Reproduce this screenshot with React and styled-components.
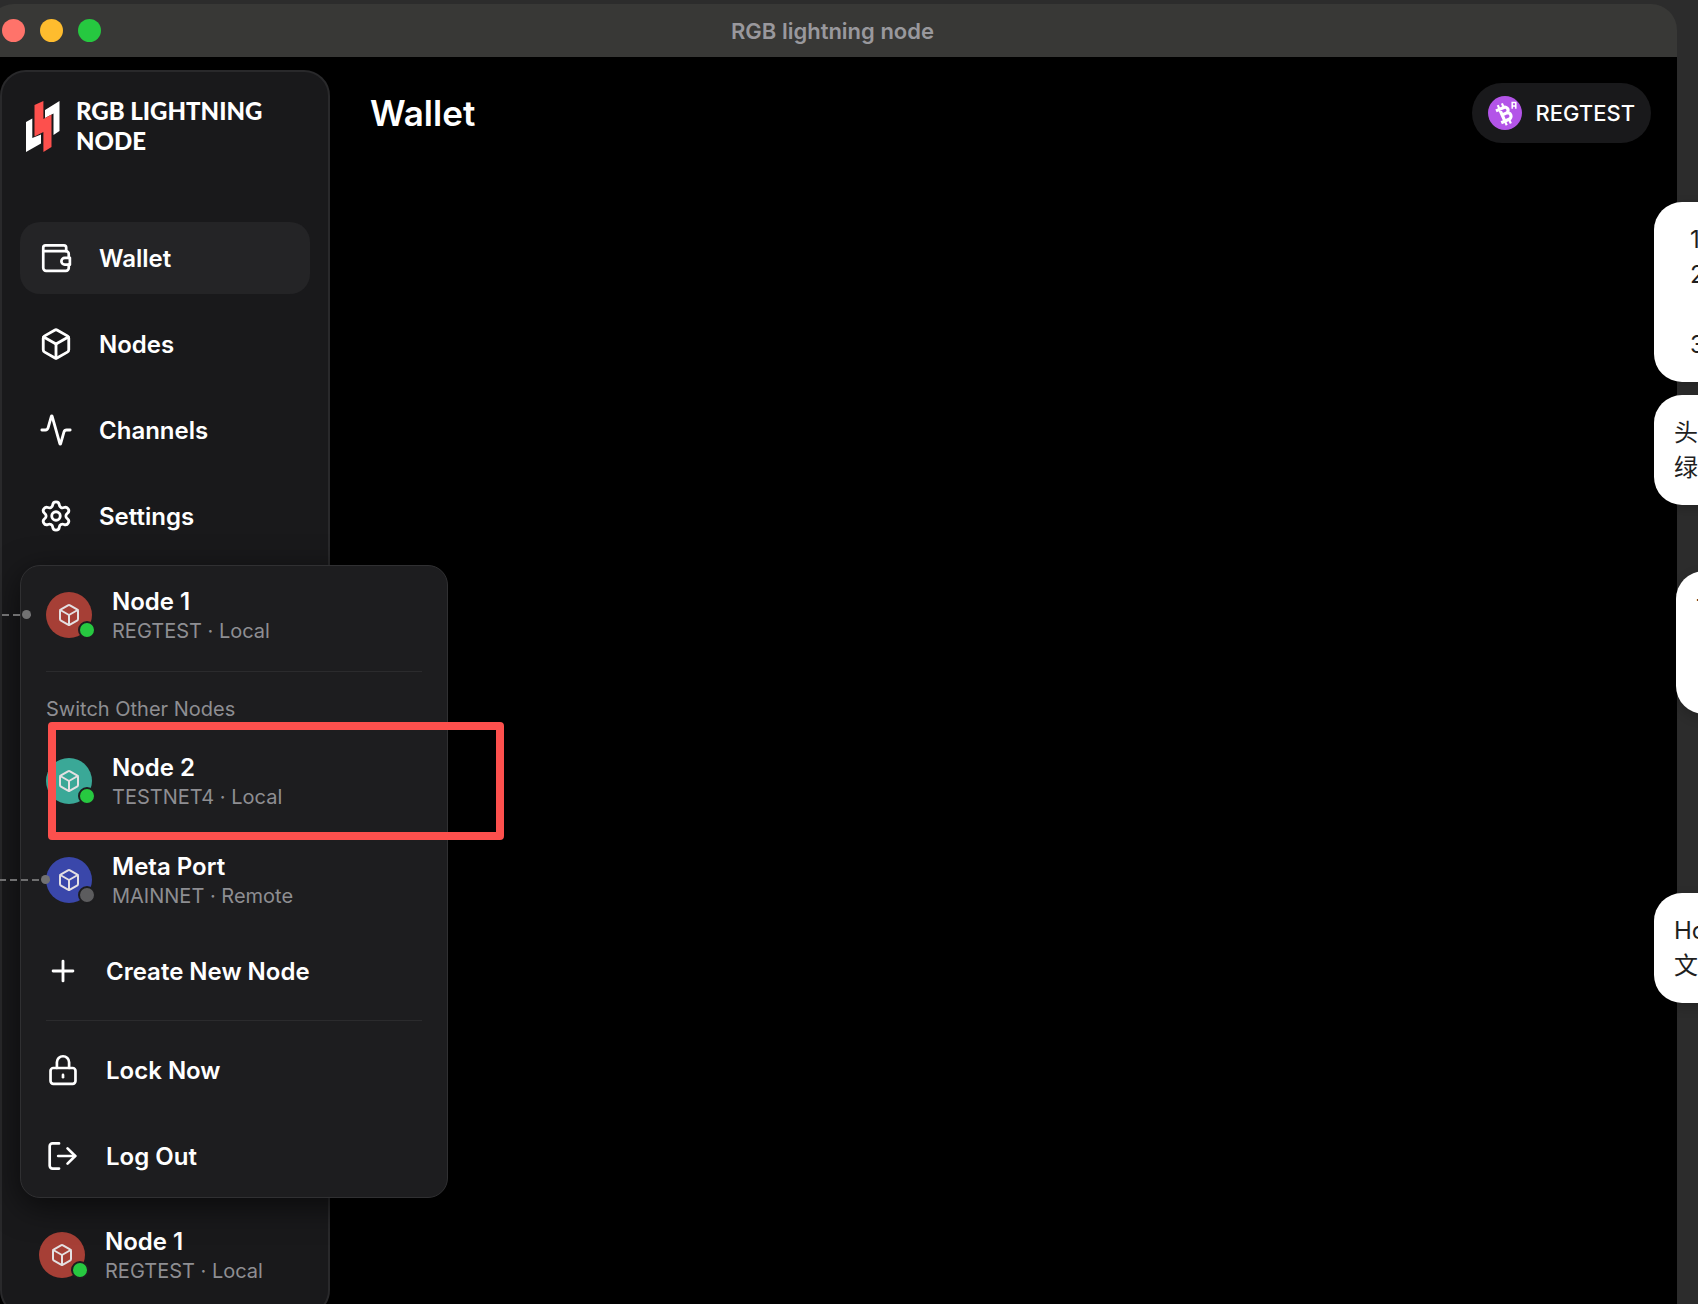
import React from 'react'
import { Activity, Box, Plus, Settings } from 'lucide-react'
import styled, { createGlobalStyle } from 'styled-components'

const GlobalStyle = createGlobalStyle`
    * {
        box-sizing: border-box;
    }

    body {
        margin: 0;
        background: #2c2c2c;
        color: #fff;
        font-family: Inter, "Liberation Sans", "Noto Sans CJK SC", sans-serif;
    }

    button {
        border: 0;
        padding: 0;
        background: none;
        color: inherit;
        font: inherit;
        text-align: left;
        cursor: pointer;
    }

    a {
        color: inherit;
        text-decoration: none;
    }

    h1, p {
        margin: 0;
    }
`

const Desktop = styled.div`
    position: relative;
    display: flex;
    height: 100vh;
    padding-top: 4px;
    overflow: hidden;
`

const Window = styled.div`
    flex: 1;
    display: flex;
    flex-direction: column;
    margin: 0 21px 0 -12px;
`

const TitleBar = styled.div`
    flex: none;
    display: grid;
    grid-template-columns: 1fr auto 1fr;
    align-items: center;
    height: 53px;
    padding: 0 14px;
    border-radius: 26px 26px 0 0;
    background: #383836;
    color: #99989d;
    font-size: 22px;
    font-weight: 600;
    line-height: 28px;
`

const Lights = styled.div`
    display: flex;
    gap: 15px;
`

const Light = styled.button`
    width: 23px;
    height: 23px;
    border-radius: 50%;
    background: ${({ $color }) => $color};
`

const Content = styled.div`
    flex: 1;
    display: flex;
    padding: 13px 26px 0 12px;
    background: #000;
`

const Sidebar = styled.aside`
    position: relative;
    flex: none;
    display: flex;
    flex-direction: column;
    width: 330px;
    height: calc(100vh - 58px);
    padding: 27px 18px 17px;
    border: 2px solid #29292b;
    border-radius: 26px;
    background: #19191b;
`

const Brand = styled.div`
    display: flex;
    align-items: center;
    gap: 16px;
    height: 54px;
    padding-left: 6px;
    margin-bottom: 69px;
    font-family: Lato, "Noto Sans", sans-serif;
    font-size: 24px;
    font-weight: 900;
    line-height: 30px;
`

const Nav = styled.nav`
    display: flex;
    flex-direction: column;
    gap: 14px;
`

const NavLink = styled.a`
    display: flex;
    align-items: center;
    gap: 26px;
    height: 72px;
    padding-left: 19px;
    border-radius: 20px;
    background: ${({ $active }) => ($active ? '#242426' : 'transparent')};
    font-size: 24px;
    font-weight: 600;
`

const Menu = styled.div`
    position: absolute;
    left: 18px;
    bottom: 116px;
    display: flex;
    flex-direction: column;
    gap: 14px;
    width: 428px;
    padding: 6px 25px;
    border: 1px solid #303032;
    border-radius: 20px;
    background: #1d1d1f;
    box-shadow: 0 8px 32px rgba(0, 0, 0, 0.6);
`

const MenuActions = styled.div`
    display: flex;
    flex-direction: column;
    gap: 16px;
`

const MenuButton = styled.button`
    display: flex;
    align-items: center;
    gap: 26px;
    height: 70px;
    font-size: 24px;
    font-weight: 600;
`

const MenuLabel = styled.p`
    padding: 10px 0 2px;
    color: #8e8e92;
    font-size: 20px;
    line-height: 26px;
`

const Divider = styled.hr`
    width: 100%;
    margin: 0;
    border: 0;
    border-top: 1px solid #2b2b2d;
`

const NodeRow = styled.div`
    position: relative;
    display: flex;
`

const NodeButton = styled.button`
    flex: 1;
    display: flex;
    align-items: center;
    gap: 20px;
    height: 85px;
`

const Footer = styled.div`
    margin-top: auto;
    padding-left: 19px;
    display: flex;
`

const Avatar = styled.span`
    position: relative;
    display: flex;
    align-items: center;
    justify-content: center;
    width: 46px;
    height: 46px;
    border-radius: 50%;
    background: ${({ $color }) => $color};
    color: #e4e0e2;
`

const Status = styled.span`
    position: absolute;
    right: -4px;
    bottom: -1px;
    width: 18px;
    height: 18px;
    border: 2px solid #1d1d1f;
    border-radius: 50%;
    background: ${({ $online }) => ($online ? '#27c840' : '#5c5c5e')};
`

const NodeText = styled.span`
    display: flex;
    flex-direction: column;
    padding-top: 2px;
`

const NodeName = styled.span`
    font-size: 24px;
    font-weight: 600;
    line-height: 30px;
`

const NodeNetwork = styled.span`
    color: #8e8e92;
    font-size: 20px;
    line-height: 28px;
`

const Connector = styled.span`
    position: absolute;
    top: 42px;
    right: calc(100% + ${({ $gap }) => $gap}px);
    width: 72px;
    height: 2px;
    background: repeating-linear-gradient(to left, #6f6f70 0 7px, transparent 7px 11px);

    &::after {
        content: '';
        position: absolute;
        top: -4px;
        right: 0;
        width: 9px;
        height: 9px;
        border-radius: 50%;
        background: #717172;
    }
`

const Highlight = styled.span`
    position: absolute;
    top: -16px;
    left: 2px;
    width: 456px;
    height: 118px;
    border: 8px solid #fd504d;
    border-radius: 4px;
    pointer-events: none;
`

const Main = styled.main`
    flex: 1;
    padding: 13px 0 0 40px;
`

const Header = styled.header`
    display: flex;
    align-items: center;
    justify-content: space-between;
`

const PageTitle = styled.h1`
    font-size: 35px;
    font-weight: 600;
    line-height: 44px;
`

const NetworkPill = styled.button`
    display: flex;
    align-items: center;
    gap: 13px;
    height: 60px;
    padding: 0 16px;
    border-radius: 30px;
    background: #19191b;
    font-size: 22px;
    font-weight: 500;
`

const Notes = styled.div`
    position: absolute;
    top: 202px;
    left: calc(100% - 44px);
    width: 320px;
    display: flex;
    flex-direction: column;
    color: #1f1f1f;
    font-size: 24px;
    line-height: 35px;
    white-space: nowrap;
`

const Note = styled.div`
    min-height: ${({ $height }) => $height}px;
    margin: ${({ $space }) => $space}px 0 0 ${({ $indent }) => $indent || 0}px;
    padding: 20px;
    border-radius: 28px;
    background: #fff;
    box-shadow: 0 4px 12px rgba(0, 0, 0, 0.2);
`

const Steps = styled.div`
    display: grid;
    padding-left: 16px;

    p:last-child {
        margin-top: 35px;
    }
`

const iconStyle = { size: 34, strokeWidth: 2, 'aria-hidden': true }

function LineIcon({ children }) {
  return (
    <svg width="34" height="34" viewBox="0 0 24 24" fill="none" stroke="currentColor" strokeWidth="1.9" strokeLinecap="round" strokeLinejoin="round" aria-hidden="true">
      {children}
    </svg>
  )
}

function WalletIcon() {
  return (
    <LineIcon>
      <path d="M19.2 7.2V4.7a1.6 1.6 0 0 0-1.6-1.6H4.6A1.6 1.6 0 0 0 3 4.7v14.4a2 2 0 0 0 2 2h14a2 2 0 0 0 2-2v-2.4" />
      <path d="M3 7.2h16a2 2 0 0 1 2 2v2.7" />
      <path d="M21.8 11.9h-3.6a2.4 2.4 0 0 0 0 4.8h3.6z" />
    </LineIcon>
  )
}

function LockIcon() {
  return (
    <LineIcon>
      <rect x="3.2" y="10.6" width="17.6" height="11.2" rx="2" />
      <path d="M7.7 10.6V6.6a4.3 4.3 0 0 1 8.600 0v4" />
      <path d="M12 15.500v1.600" />
    </LineIcon>
  )
}

function LogOutIcon() {
  return (
    <LineIcon>
      <path d="M9.2 3.1H4.600a2 2 0 0 0-2 2v13.800a2 2 0 0 0 2 2h4.600" />
      <path d="M8.600 12h12" />
      <path d="m15.200 6.600 5.400 5.400-5.400 5.400" />
    </LineIcon>
  )
}

function Logo() {
  return (
    <svg width="34" height="51" viewBox="0 0 34 51" aria-hidden="true">
      <path fill="#fff" d="M0 21 6.300 17.500V37L15 33.500V42.500L0 51Z" />
      <path fill="#fff" d="M19 9 33.500 0V30L27.500 34V12.500L19 17Z" />
      <path fill="#fd504d" d="M8.500 4 17.400 0V18L25.500 13.500V46L17.400 51V31L8.500 35.500Z" />
    </svg>
  )
}

function BitcoinBadge() {
  return (
    <svg width="34" height="34" viewBox="0 0 34 34" fill="none" stroke="#fff" aria-hidden="true">
      <circle cx="17" cy="17" r="17" fill="#b354e8" stroke="none" />
      <g transform="rotate(-24 17 18)">
        <path strokeWidth="3.200" d="M14 11.500V24.500M10 11.500h8.500a3 3 0 0 1 0 6.200H14M18.500 17.700a3.400 3.400 0 0 1 0 6.800H10" />
        <path strokeWidth="2.200" d="M14 7v4M18.500 7v4M14 25v4M18.500 25v4" />
      </g>
      <path strokeWidth="1.500" d="M24.200 12.800V6.500h3.600V10H24.200M27.800 10v2.800" />
    </svg>
  )
}

function NodeInfo({ name, network, color, online }) {
  return (
    <NodeButton type="button">
      <Avatar $color={color}>
        <Box size={24} strokeWidth={2} aria-hidden="true" />
        <Status $online={online} />
      </Avatar>
      <NodeText>
        <NodeName>{name}</NodeName>
        <NodeNetwork>{network}</NodeNetwork>
      </NodeText>
    </NodeButton>
  )
}

function NodeMenu() {
  return (
    <Menu>
      <NodeRow>
        <NodeInfo name="Node 1" network="REGTEST · Local" color="#a63f36" online />
        <Connector $gap={15} />
      </NodeRow>
      <Divider />
      <MenuLabel>Switch Other Nodes</MenuLabel>
      <NodeRow>
        <NodeInfo name="Node 2" network="TESTNET4 · Local" color="#3aa897" online />
        <Highlight />
      </NodeRow>
      <NodeRow>
        <NodeInfo name="Meta Port" network="MAINNET · Remote" color="#3a47aa" />
        <Connector $gap={-4} />
      </NodeRow>
      <MenuButton type="button"><Plus {...iconStyle} />Create New Node</MenuButton>
      <Divider />
      <MenuActions>
        <MenuButton type="button"><LockIcon />Lock Now</MenuButton>
        <MenuButton type="button"><LogOutIcon />Log Out</MenuButton>
      </MenuActions>
    </Menu>
  )
}

export default function App() {
  return (
    <Desktop>
      <GlobalStyle />
      <Window>
        <TitleBar>
          <Lights>
            <Light type="button" aria-label="Close" $color="#ff736a" />
            <Light type="button" aria-label="Minimize" $color="#febc2e" />
            <Light type="button" aria-label="Zoom" $color="#26c840" />
          </Lights>
          <span>RGB lightning node</span>
        </TitleBar>
        <Content>
          <Sidebar>
            <Brand>
              <Logo />
              <span>RGB LIGHTNING<br />NODE</span>
            </Brand>
            <Nav>
              <NavLink href="#wallet" $active><WalletIcon />Wallet</NavLink>
              <NavLink href="#nodes"><Box {...iconStyle} />Nodes</NavLink>
              <NavLink href="#channels"><Activity {...iconStyle} />Channels</NavLink>
              <NavLink href="#settings"><Settings {...iconStyle} />Settings</NavLink>
            </Nav>
            <Footer>
              <NodeInfo name="Node 1" network="REGTEST · Local" color="#a63f36" online />
            </Footer>
            <NodeMenu />
          </Sidebar>
          <Main>
            <Header>
              <PageTitle>Wallet</PageTitle>
              <NetworkPill type="button"><BitcoinBadge />REGTEST</NetworkPill>
            </Header>
          </Main>
        </Content>
      </Window>
      <Notes>
        <Note $height={180} $space={0}>
          <Steps>
            <p>1.</p>
            <p>2.</p>
            <p>3.</p>
          </Steps>
        </Note>
        <Note $height={110} $space={13}>
          <p>头</p>
          <p>绿</p>
        </Note>
        <Note $height={143} $space={66} $indent={22}>
          <p>T</p>
        </Note>
        <Note $height={110} $space={179}>
          <p>Ho</p>
          <p>文</p>
        </Note>
      </Notes>
    </Desktop>
  )
}
